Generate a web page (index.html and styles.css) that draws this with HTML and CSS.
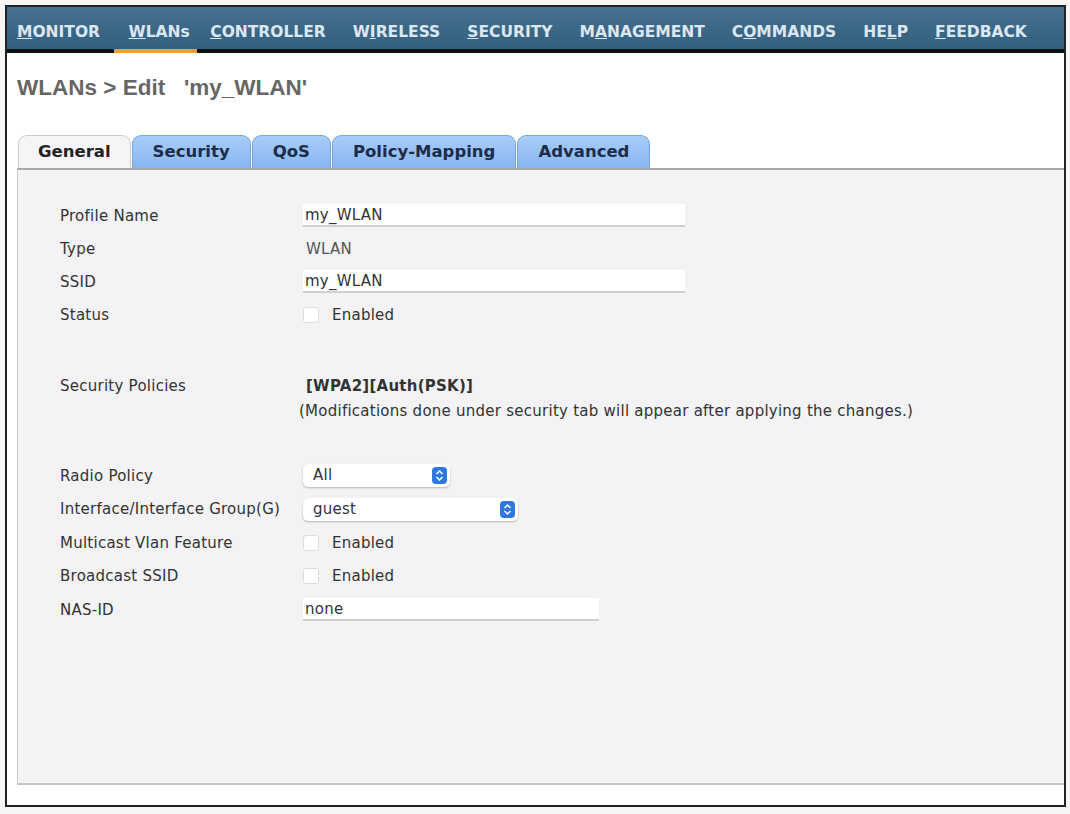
FILE: index.html
```html
<!DOCTYPE html>
<html lang="en">
<head>
    <meta charset="UTF-8">
    <title>WLANs &gt; Edit</title>
    <link rel="stylesheet" href="styles.css">
</head>
<body>
    <div class="frame">
        <div class="topnav">
            <a class="first"><u>M</u>ONITOR</a>
            <a class="active"><u>W</u>LANs</a>
            <a><u>C</u>ONTROLLER</a>
            <a>W<u>I</u>RELESS</a>
            <a><u>S</u>ECURITY</a>
            <a>M<u>A</u>NAGEMENT</a>
            <a>C<u>O</u>MMANDS</a>
            <a>HE<u>L</u>P</a>
            <a><u>F</u>EEDBACK</a>
        </div>

        <h1 class="title">WLANs &gt; Edit &nbsp;&nbsp;'my_WLAN'</h1>

        <div class="tabs">
            <div class="tab current">General</div>
            <div class="tab">Security</div>
            <div class="tab">QoS</div>
            <div class="tab">Policy-Mapping</div>
            <div class="tab">Advanced</div>
        </div>

        <div class="panel">
            <div class="form first-block">
                <div class="label">Profile Name</div>
                <div class="value"><div class="input wide">my_WLAN</div></div>
                <div class="label">Type</div>
                <div class="value plain">WLAN</div>
                <div class="label">SSID</div>
                <div class="value"><div class="input wide">my_WLAN</div></div>
                <div class="label">Status</div>
                <div class="value"><span class="check"></span>Enabled</div>
            </div>

            <div class="form policy-block">
                <div class="label">Security Policies</div>
                <div class="value policy">[WPA2][Auth(PSK)]</div>
                <div></div>
                <div class="note">(Modifications done under security tab will appear after applying the changes.)</div>
            </div>

            <div class="form last-block">
                <div class="label">Radio Policy</div>
                <div class="value">
                    <div class="select small">All
                        <svg class="arrows" width="15" height="17" viewBox="0 0 15 17"><rect x="0" y="0" width="15" height="17" rx="4" fill="#2f78e0"/><path d="M4.5 7 L7.5 4 L10.5 7 M4.5 10 L7.5 13 L10.5 10" stroke="#fff" stroke-width="1.5" fill="none"/></svg>
                    </div>
                </div>
                <div class="label">Interface/Interface Group(G)</div>
                <div class="value">
                    <div class="select medium">guest
                        <svg class="arrows" width="15" height="17" viewBox="0 0 15 17"><rect x="0" y="0" width="15" height="17" rx="4" fill="#2f78e0"/><path d="M4.5 7 L7.5 4 L10.5 7 M4.5 10 L7.5 13 L10.5 10" stroke="#fff" stroke-width="1.5" fill="none"/></svg>
                    </div>
                </div>
                <div class="label">Multicast Vlan Feature</div>
                <div class="value"><span class="check"></span>Enabled</div>
                <div class="label">Broadcast SSID</div>
                <div class="value"><span class="check"></span>Enabled</div>
                <div class="label">NAS-ID</div>
                <div class="value"><div class="input nas">none</div></div>
            </div>
        </div>
    </div>
</body>
</html>
```

FILE: styles.css
```css
body {
    margin: 0;
    background: #f6f6f6;
    font-family: "DejaVu Sans", Verdana, sans-serif;
    color: #333;
}
.frame {
    box-sizing: border-box;
    width: 1061px;
    height: 802px;
    margin: 5px 0 0 5px;
    border: 2px solid #222;
    background: #fff;
}
.topnav {
    display: flex;
    height: 42px;
    background: linear-gradient(#46708f, #31607f);
    border-bottom: 4px solid #111;
}
.topnav a {
    display: flex;
    align-items: center;
    padding: 7px 13.5px 0 13.5px;
    margin-bottom: -4px;
    border-bottom: 4px solid transparent;
    color: #dce6ef;
    font-weight: bold;
    font-size: 15.5px;
}
.topnav a.first {
    padding-left: 10px;
}
.topnav a.active {
    padding-left: 15px;
    padding-right: 7px;
    border-bottom-color: #f0a030;
}
.topnav u {
    text-decoration-thickness: 1px;
}
.title {
    margin: 21px 0 0 10px;
    font-family: "Liberation Sans", Arial, sans-serif;
    font-size: 22.5px;
    color: #666;
    line-height: 28px;
}
.tabs {
    display: flex;
    gap: 1px;
    margin: 33px 0 0 11px;
    height: 33px;
}
.tab {
    padding: 0 20px;
    border: 1px solid #7aa6da;
    border-bottom: none;
    border-radius: 9px 9px 0 0;
    background: linear-gradient(#a8cdf8, #86b6ef);
    font-size: 16.5px;
    font-weight: bold;
    color: #1d2c48;
    line-height: 32px;
}
.tab.current {
    padding: 0 19px;
    background: #f5f4f6;
    border-color: #ccc;
    color: #222;
}
.panel {
    margin-left: 10px;
    height: 613px;
    border-top: 2px solid #aaa;
    border-left: 1px solid #ccc;
    border-bottom: 2px solid #c4c4c4;
    background: #f3f2f4;
    font-size: 15px;
    letter-spacing: 0.25px;
}
.form {
    display: grid;
    grid-template-columns: 243px 1fr;
    padding-left: 42px;
}
.first-block {
    padding-top: 29px;
    grid-auto-rows: 33px;
}
.policy-block {
    margin-top: 38px;
    grid-template-rows: 33px 20px;
}
.last-block {
    margin-top: 37px;
    grid-auto-rows: 33.5px;
}
.label, .value {
    display: flex;
    align-items: center;
}
.value.plain {
    padding-left: 3px;
    color: #555;
}
.policy {
    padding-left: 3px;
    font-weight: bold;
}
.note {
    margin-left: -4px;
}
.input {
    box-sizing: border-box;
    height: 23px;
    padding: 2px 2px;
    background: #fff;
    border-bottom: 2px solid #d0d0d0;
}
.input.wide {
    width: 382px;
}
.input.nas {
    width: 296px;
}
.check {
    display: inline-block;
    width: 14px;
    height: 14px;
    margin-right: 13px;
    border: 1px solid #ddd;
    border-radius: 3px;
    background: #fff;
}
.select {
    position: relative;
    box-sizing: border-box;
    height: 23px;
    padding: 2px 10px;
    border-radius: 5px;
    background: #fff;
    box-shadow: 0 1px 2px rgba(0, 0, 0, 0.25);
}
.select.small {
    width: 147px;
}
.select.medium {
    width: 215px;
}
.arrows {
    position: absolute;
    right: 3px;
    top: 3px;
}
```
